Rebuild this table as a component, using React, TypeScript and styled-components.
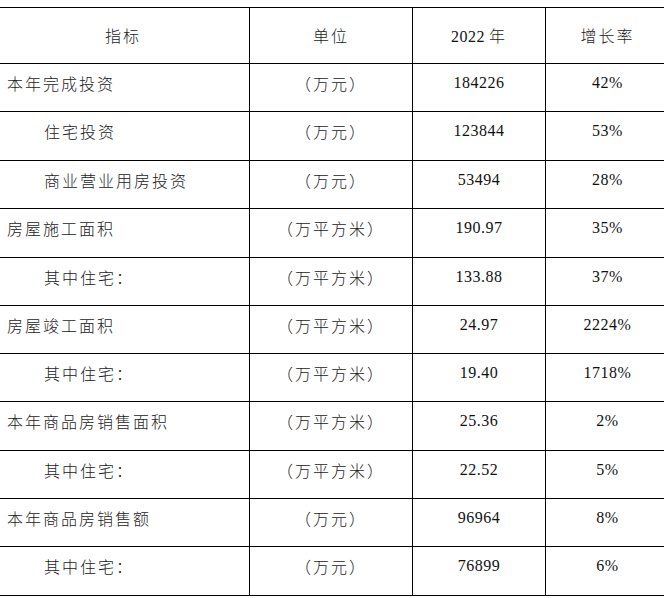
import styled, { createGlobalStyle } from "styled-components"

const GlobalStyle = createGlobalStyle`
  html, body {
    margin: 0;
    padding: 0;
    background: #fff;
  }
  body {
    overflow: hidden;
  }
`

type Row = {
  name: string
  indent?: boolean
  unit: string
  value: string
  rate: string
}

const rows: Row[] = [
  { name: "本年完成投资", unit: "（万元）", value: "184226", rate: "42%" },
  { name: "住宅投资", indent: true, unit: "（万元）", value: "123844", rate: "53%" },
  { name: "商业营业用房投资", indent: true, unit: "（万元）", value: "53494", rate: "28%" },
  { name: "房屋施工面积", unit: "（万平方米）", value: "190.97", rate: "35%" },
  { name: "其中住宅：", indent: true, unit: "（万平方米）", value: "133.88", rate: "37%" },
  { name: "房屋竣工面积", unit: "（万平方米）", value: "24.97", rate: "2224%" },
  { name: "其中住宅：", indent: true, unit: "（万平方米）", value: "19.40", rate: "1718%" },
  { name: "本年商品房销售面积", unit: "（万平方米）", value: "25.36", rate: "2%" },
  { name: "其中住宅：", indent: true, unit: "（万平方米）", value: "22.52", rate: "5%" },
  { name: "本年商品房销售额", unit: "（万元）", value: "96964", rate: "8%" },
  { name: "其中住宅：", indent: true, unit: "（万元）", value: "76899", rate: "6%" },
]

// row pitch in the source isn't a whole number of pixels
const rowHeights = [48, 49, 48, 49, 48, 48, 48, 49, 48, 48, 49]

export default function App() {
  return (
    <Page>
      <GlobalStyle />
      <StatTable>
        <colgroup>
          <col style={{ width: 253 }} />
          <col style={{ width: 163 }} />
          <col style={{ width: 133 }} />
          <col style={{ width: 124 }} />
        </colgroup>
        <thead>
          <HeadRow>
            <HeadCell><Label>指标</Label></HeadCell>
            <HeadCell><Label>单位</Label></HeadCell>
            <HeadCell><Num>2022</Num>&nbsp;<Label>年</Label></HeadCell>
            <HeadCell><Label>增长率</Label></HeadCell>
          </HeadRow>
        </thead>
        <tbody>
          {rows.map((r, i) => (
            <BodyRow key={i} style={{ height: rowHeights[i] }}>
              <NameCell $indent={r.indent}><Label>{r.name}</Label></NameCell>
              <Cell><Label>{r.unit}</Label></Cell>
              <Cell><Num>{r.value}</Num></Cell>
              <Cell><Num>{r.rate}</Num></Cell>
            </BodyRow>
          ))}
        </tbody>
      </StatTable>
    </Page>
  )
}

const Page = styled.div`
  width: 664px;
  height: 598px;
  overflow: hidden;
  padding-top: 7px;
  box-sizing: border-box;
  background: #fff;
`

const StatTable = styled.table`
  margin-left: -4px;
  width: 673px;
  border-collapse: collapse;
  table-layout: fixed;
  font-family: "Liberation Serif", "Noto Sans CJK SC", serif;
  font-size: 16px;
  color: #111;
`

const HeadRow = styled.tr`
  height: 56px;
`

const BodyRow = styled.tr``

const HeadCell = styled.th`
  border: 1px solid #000;
  font-weight: normal;
  text-align: center;
  vertical-align: middle;
  padding: 0 0 2px;
`

const Cell = styled.td`
  border: 1px solid #000;
  text-align: center;
  vertical-align: middle;
  padding: 0 0 10px;
  white-space: nowrap;
`

const NameCell = styled(Cell)<{ $indent?: boolean }>`
  text-align: left;
  padding-left: ${p => (p.$indent ? "47px" : "10px")};
`

const Label = styled.span`
  font-family: "Noto Sans CJK SC", sans-serif;
  font-weight: 300;
  letter-spacing: 2px;
  color: #222;
`

const Num = styled.span`
  letter-spacing: 0.5px;
`
